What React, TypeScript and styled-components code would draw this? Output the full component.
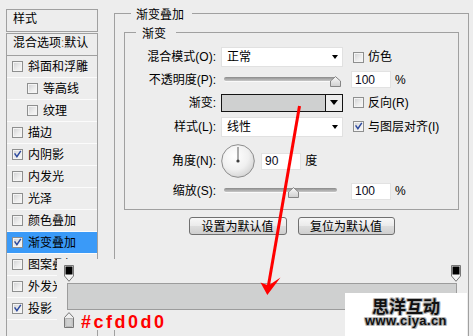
import React from "react";
import styled, { createGlobalStyle } from "styled-components";

const UI_FONT = `"Liberation Sans", "Noto Sans CJK SC", sans-serif`;
const CJK_FONT = `"Noto Sans CJK SC", "Liberation Sans", sans-serif`;

const GlobalStyle = createGlobalStyle`
  html, body { margin: 0; padding: 0; background: #ededed; }
  body { font-family: ${UI_FONT}; font-size: 12px; color: #000; }
  *, *::before, *::after { box-sizing: border-box; }
`;

const Page = styled.div`
  position: relative;
  width: 473px;
  height: 336px;
  overflow: hidden;
  display: flex;
  align-items: flex-start;
  background: #ededed;
  font-family: ${UI_FONT};
  font-size: 12px;
  line-height: 14px;
  color: #000;
`;

/* ---------- left style list ---------- */
const Sidebar = styled.aside`
  margin: 9px 0 0 6px;
  width: 92px;
  height: 340px;
  flex-shrink: 0;
  display: flex;
  flex-direction: column;
`;

const SidebarHeader = styled.div`
  height: 23px;
  border: 1px solid #a0a0a0;
  padding: 0 0 3px 6px;
  display: flex;
  align-items: center;
`;

const StyleList = styled.ul`
  list-style: none;
  margin: 1px 0 0;
  padding: 0;
  flex: 1;
  border: 1px solid #a0a0a0;
`;

const ListRow = styled.li<{ $indent?: boolean; $active?: boolean; $blend?: boolean }>`
  height: 22px;
  display: flex;
  align-items: center;
  gap: 5px;
  padding-left: ${(p) => (p.$blend ? 6 : p.$indent ? 20 : 5)}px;
  padding-bottom: ${(p) => (p.$blend ? 3 : 0)}px;
  border-bottom: 1px solid ${(p) => (p.$blend ? "#a0a0a0" : "#fbfbfb")};
  background: ${(p) => (p.$active ? "#3a9af8" : "transparent")};
  white-space: nowrap;
  overflow: hidden;
`;

const Colon = styled.span`
  color: #9a6420;
`;

const Box = styled.span`
  width: 11px;
  height: 11px;
  flex-shrink: 0;
  display: inline-flex;
  border: 1px solid #8e8f8f;
  background: linear-gradient(135deg, #cfd0d2 0%, #eeeeee 60%, #f8f8f8 100%);
  box-shadow: inset 0 0 0 1px #f4f4f4;
`;

const CheckMark = styled.svg`
  width: 9px;
  height: 9px;
`;

function CheckBox({ checked }: { checked?: boolean }) {
  return (
    <Box>
      {checked && (
        <CheckMark viewBox="0 0 9 9">
          <path d="M1.6 3.4 L3.9 6.6 L7.8 0.8" fill="none" stroke="#2d4a9e" strokeWidth="1.5" />
        </CheckMark>
      )}
    </Box>
  );
}

/* ---------- right settings ---------- */
const Main = styled.main`
  margin-left: 16px;
  width: 355px;
  flex-shrink: 0;
`;

const OuterGroup = styled.fieldset`
  margin: 6px 0 0;
  padding: 0;
  min-width: 0;
  min-height: 360px;
  border: 1px solid #a0a0a0;
`;

const InnerGroup = styled.fieldset`
  margin: 0;
  padding: 0;
  min-width: 0;
  border: 1px solid #a0a0a0;
`;

const GroupLegend = styled.legend<{ $inset: number; $padL: number; $padR: number }>`
  margin-left: ${(p) => p.$inset}px;
  padding: 0 ${(p) => p.$padR}px 0 ${(p) => p.$padL}px;
  line-height: 15px;
  font-family: ${CJK_FONT};
  font-size: 12px;
`;

const OuterBody = styled.div`
  padding: 4px 9px 0 9px;
`;

const InnerBody = styled.div`
  padding: 6px 0 10px 0;
  display: flex;
  flex-direction: column;
`;

const FormRow = styled.div<{ $h: number }>`
  height: ${(p) => p.$h}px;
  display: flex;
  align-items: center;
`;

const FieldLabel = styled.label`
  width: 91px;
  margin-right: 5px;
  flex-shrink: 0;
  text-align: right;
  white-space: nowrap;
`;

const ControlCell = styled.div`
  width: 122px;
  margin-right: 10px;
  flex-shrink: 0;
  display: flex;
  align-items: center;
`;

const SideCell = styled.div`
  display: flex;
  align-items: center;
  gap: 4px;
  white-space: nowrap;
`;

const SelectBox = styled.div`
  width: 122px;
  height: 20px;
  background: #fff;
  border: 1px solid #e1e1e1;
  display: flex;
  align-items: center;
  justify-content: space-between;
  padding: 0 4px 0 5px;
`;

const DropArrow = styled.span<{ $w: number; $h: number }>`
  width: 0;
  height: 0;
  border-left: ${(p) => p.$w / 2}px solid transparent;
  border-right: ${(p) => p.$w / 2}px solid transparent;
  border-top: ${(p) => p.$h}px solid #000;
`;

const SliderWrap = styled.div`
  position: relative;
  width: 122px;
  height: 16px;
`;

const SliderTrack = styled.div`
  position: absolute;
  left: 3px;
  top: 5px;
  width: 113px;
  height: 4px;
  border-radius: 2px;
  background: linear-gradient(#8a8a8a, #c8c8c8);
  box-shadow: 0 1px 0 #fafafa;
`;

const SliderThumb = styled.svg`
  position: absolute;
  top: 4px;
  width: 11px;
  height: 11px;
`;

function Slider({ value, min, max }: { value: number; min: number; max: number }) {
  const pct = (value - min) / (max - min);
  return (
    <SliderWrap>
      <SliderTrack />
      <SliderThumb viewBox="0 0 11 11" style={{ left: `${3 + pct * 106}px` }}>
        <defs>
          <linearGradient id="thumbFill" x1="0" y1="0" x2="0" y2="1">
            <stop offset="0" stopColor="#fafafa" />
            <stop offset="1" stopColor="#cfcfcf" />
          </linearGradient>
        </defs>
        <path d="M5.5 0.6 L10.5 5 V10.5 H0.5 V5 Z" fill="url(#thumbFill)" stroke="#858585" />
      </SliderThumb>
    </SliderWrap>
  );
}

const GradientPicker = styled.div`
  width: 122px;
  height: 18px;
  border: 1px solid #141414;
  display: flex;
`;

const GradientSwatch = styled.div<{ $color: string }>`
  flex: 1;
  background: ${(p) => p.$color};
`;

const GradientDrop = styled.div`
  width: 17px;
  border-left: 1px solid #141414;
  background: #ececec;
  display: flex;
  align-items: center;
  justify-content: center;
`;

const NumberField = styled.input<{ $shift?: number }>`
  width: 40px;
  height: 17px;
  margin: 0 0 0 ${(p) => p.$shift ?? 0}px;
  padding: 0 0 0 3px;
  border: 1px solid #e2e2e2;
  background: #fff;
  font-family: "Liberation Sans", sans-serif;
  font-size: 12px;
  color: #0a0a20;
  outline: none;
`;

const DialSvg = styled.svg`
  width: 34px;
  height: 34px;
  flex-shrink: 0;
  margin-right: 6px;
`;

function AngleDial({ angle }: { angle: number }) {
  const r = (angle * Math.PI) / 180;
  const x2 = 17 + Math.cos(r) * 14;
  const y2 = 17 - Math.sin(r) * 14;
  return (
    <DialSvg viewBox="0 0 34 34">
      <defs>
        <radialGradient id="dialFill" cx="0.4" cy="0.35" r="0.7">
          <stop offset="0" stopColor="#ffffff" />
          <stop offset="0.6" stopColor="#f0f0f0" />
          <stop offset="1" stopColor="#d2d2d2" />
        </radialGradient>
      </defs>
      <circle cx="17" cy="17" r="16.3" fill="url(#dialFill)" stroke="#8c8c8c" />
      <line x1="17" y1="17" x2={x2} y2={y2} stroke="#5c5c5c" strokeWidth="1" />
      <circle cx="17" cy="17" r="1.6" fill="#3c3c3c" />
    </DialSvg>
  );
}

const Unit = styled.span`
  margin-left: 1px;
`;

const ButtonRow = styled.div`
  display: flex;
  justify-content: center;
  gap: 11px;
  margin-top: 7px;
`;

const DialogButton = styled.button<{ $w: number }>`
  width: ${(p) => p.$w}px;
  height: 18px;
  padding: 0;
  border: 1px solid #707070;
  border-radius: 3px;
  background: linear-gradient(#f7f7f7 0%, #ebebeb 48%, #dddddd 52%, #cfcfcf 100%);
  font-family: ${CJK_FONT};
  font-size: 12px;
  line-height: 16px;
  color: #000;
`;

/* ---------- gradient editor strip (lies over the dialog) ---------- */
const GradientEditor = styled.div`
  position: absolute;
  left: 57px;
  top: 259px;
  width: 408px;
  height: 71px;
  padding: 6px 0 0 7px;
  background: #ededed;
  display: flex;
  flex-direction: column;
`;

const StopTrack = styled.div`
  position: relative;
  width: 397px;
  height: 17px;
`;

const OpacityStop = styled.svg`
  position: absolute;
  top: 0;
  width: 10px;
  height: 17px;
`;

const GradientBar = styled.div<{ $from: string; $to: string }>`
  margin: 1px 0 0 3px;
  width: 390px;
  height: 27px;
  border: 1px solid #9c9c9c;
  background: linear-gradient(to right, ${(p) => p.$from}, ${(p) => p.$to});
`;

const BottomRow = styled.div`
  margin-top: 2px;
  display: flex;
  align-items: flex-start;
`;

const ColorStopSvg = styled.svg`
  width: 10px;
  height: 16px;
  flex-shrink: 0;
`;

const HexLabel = styled.span`
  margin: 2px 0 0 7px;
  font-family: "Liberation Sans", sans-serif;
  font-weight: bold;
  font-size: 18px;
  line-height: 16px;
  letter-spacing: 2.5px;
  color: #ff0000;
`;

const Watermark = styled.div`
  position: absolute;
  left: 345px;
  top: 293px;
  width: 122px;
  height: 50px;
  padding-top: 4px;
  background: #fff;
  display: flex;
  flex-direction: column;
  align-items: center;
  text-shadow: 1px 0 0 #b0b0b0, -1px 0 0 #b0b0b0, 0 1px 0 #b0b0b0, 0 -1px 0 #b0b0b0,
    1px 1px 0 #c8c8c8, -1px -1px 0 #c8c8c8, 1px -1px 0 #c8c8c8, -1px 1px 0 #c8c8c8;
`;

const MarkTitle = styled.span`
  font-family: ${CJK_FONT};
  font-weight: bold;
  font-size: 17px;
  line-height: 17px;
  color: #111;
`;

const MarkUrl = styled.span`
  font-family: "Liberation Sans", sans-serif;
  font-weight: bold;
  font-size: 13px;
  line-height: 13px;
  letter-spacing: 0.4px;
  color: #111;
`;

const ArrowLayer = styled.svg`
  position: absolute;
  left: 0;
  top: 0;
  width: 473px;
  height: 336px;
  pointer-events: none;
`;

const layerStyles = [
  { name: "斜面和浮雕" },
  { name: "等高线", indent: true },
  { name: "纹理", indent: true },
  { name: "描边" },
  { name: "内阴影", checked: true },
  { name: "内发光" },
  { name: "光泽" },
  { name: "颜色叠加" },
  { name: "渐变叠加", checked: true, active: true },
  { name: "图案叠加" },
  { name: "外发光" },
  { name: "投影", checked: true },
];

const GRAD_COLOR = "#cfd0d0";

export default function App() {
  return (
    <>
      <GlobalStyle />
      <Page>
        <Sidebar>
          <SidebarHeader>样式</SidebarHeader>
          <StyleList>
            <ListRow $blend>
              <span>
                混合选项<Colon>:</Colon>默认
              </span>
            </ListRow>
            {layerStyles.map((s) => (
              <ListRow key={s.name} $indent={s.indent} $active={s.active}>
                <CheckBox checked={s.checked} />
                <span>{s.name}</span>
              </ListRow>
            ))}
          </StyleList>
        </Sidebar>

        <Main>
          <OuterGroup>
            <GroupLegend $inset={16} $padL={5} $padR={8}>
              渐变叠加
            </GroupLegend>
            <OuterBody>
              <InnerGroup>
                <GroupLegend $inset={11} $padL={6} $padR={10}>
                  渐变
                </GroupLegend>
                <InnerBody>
                  <FormRow $h={22}>
                    <FieldLabel>混合模式(O):</FieldLabel>
                    <ControlCell>
                      <SelectBox>
                        <span>正常</span>
                        <DropArrow $w={7} $h={4} />
                      </SelectBox>
                    </ControlCell>
                    <SideCell>
                      <CheckBox />
                      <span>仿色</span>
                    </SideCell>
                  </FormRow>
                  <FormRow $h={23}>
                    <FieldLabel>不透明度(P):</FieldLabel>
                    <ControlCell>
                      <Slider value={100} min={0} max={100} />
                    </ControlCell>
                    <SideCell>
                      <NumberField $shift={-2} value="100" readOnly />
                      <span>%</span>
                    </SideCell>
                  </FormRow>
                  <FormRow $h={23}>
                    <FieldLabel>渐变:</FieldLabel>
                    <ControlCell>
                      <GradientPicker>
                        <GradientSwatch $color={GRAD_COLOR} />
                        <GradientDrop>
                          <DropArrow $w={8} $h={5} />
                        </GradientDrop>
                      </GradientPicker>
                    </ControlCell>
                    <SideCell>
                      <CheckBox />
                      <span>反向(R)</span>
                    </SideCell>
                  </FormRow>
                  <FormRow $h={25}>
                    <FieldLabel>样式(L):</FieldLabel>
                    <ControlCell>
                      <SelectBox>
                        <span>线性</span>
                        <DropArrow $w={7} $h={4} />
                      </SelectBox>
                    </ControlCell>
                    <SideCell>
                      <CheckBox checked />
                      <span>与图层对齐(I)</span>
                    </SideCell>
                  </FormRow>
                  <FormRow $h={44}>
                    <FieldLabel>角度(N):</FieldLabel>
                    <ControlCell>
                      <AngleDial angle={90} />
                      <NumberField value="90" readOnly />
                      <Unit>&nbsp;度</Unit>
                    </ControlCell>
                  </FormRow>
                  <FormRow $h={16}>
                    <FieldLabel>缩放(S):</FieldLabel>
                    <ControlCell>
                      <Slider value={100} min={10} max={160} />
                    </ControlCell>
                    <SideCell>
                      <NumberField $shift={-2} value="100" readOnly />
                      <span>%</span>
                    </SideCell>
                  </FormRow>
                </InnerBody>
              </InnerGroup>
              <ButtonRow>
                <DialogButton $w={98}>设置为默认值</DialogButton>
                <DialogButton $w={97}>复位为默认值</DialogButton>
              </ButtonRow>
            </OuterBody>
          </OuterGroup>
        </Main>

        <GradientEditor>
          <StopTrack>
            {[0, 1].map((pos) => (
              <OpacityStop key={pos} viewBox="0 0 10 17" style={{ left: `calc(${pos} * (100% - 10px))` }}>
                <path d="M0.5 0.5 H9.5 V11 L5 16.3 L0.5 11 Z" fill="#f4f4f4" stroke="#777" />
                <rect x="1.5" y="1.5" width="7" height="8" fill="#000" />
              </OpacityStop>
            ))}
          </StopTrack>
          <GradientBar $from={GRAD_COLOR} $to={GRAD_COLOR} />
          <BottomRow>
            <ColorStopSvg viewBox="0 0 10 16">
              <path d="M5 0.6 L9.5 5.5 V15.5 H0.5 V5.5 Z" fill="#f0f0f0" stroke="#777" />
              <rect x="1.8" y="6.3" width="6.4" height="8" fill={GRAD_COLOR} stroke="#9a9a9a" strokeWidth="0.6" />
            </ColorStopSvg>
            <HexLabel>#cfd0d0</HexLabel>
          </BottomRow>
        </GradientEditor>

        <Watermark>
          <MarkTitle>思洋互动</MarkTitle>
          <MarkUrl>www.ciya.cn</MarkUrl>
        </Watermark>

        <ArrowLayer viewBox="0 0 473 336">
          <line x1="299.5" y1="106" x2="268.2" y2="287" stroke="#ff0000" strokeWidth="3" />
          <polygon points="267.3,295 260.5,282.5 268.5,285.5 280.5,277.5" fill="#ff0000" />
        </ArrowLayer>
      </Page>
    </>
  );
}
